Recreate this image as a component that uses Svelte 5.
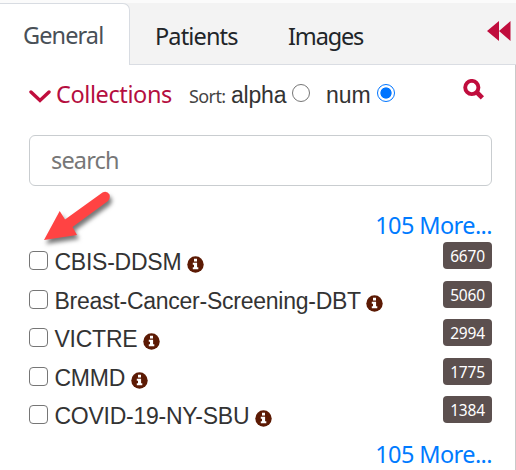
<script>
  let sort = $state('num');
  const collections = [
    { name: 'CBIS-DDSM', count: 6670 },
    { name: 'Breast-Cancer-Screening-DBT', count: 5060 },
    { name: 'VICTRE', count: 2994 },
    { name: 'CMMD', count: 1775 },
    { name: 'COVID-19-NY-SBU', count: 1384 }
  ];
</script>

<main class="panel">
  <nav class="tabs">
    <button class="tab active">General</button>
    <button class="tab patients">Patients</button>
    <button class="tab images">Images</button>
    <span class="filler"></span>
    <svg class="collapse" width="24" height="20" viewBox="0 0 24 20"><path d="M0 10 12 0V10L23.5 0V20L12 10V20Z" fill="#c00d3d" /></svg>
  </nav>
  <section class="body">
    <header class="heading">
      <svg class="chevron" width="22" height="14" viewBox="0 0 22 14"><path d="M2 2 11 10.5 20 2" fill="none" stroke="#c00d3d" stroke-width="3.4" stroke-linecap="round" /></svg>
      <span class="title">Collections</span>
      <span class="sort">Sort:</span>
      <label class="alpha">alpha<input type="radio" name="sort" value="alpha" bind:group={sort} /></label>
      <label class="num">num<input type="radio" name="sort" value="num" bind:group={sort} /></label>
      <svg class="magnifier" width="22" height="21" viewBox="0 0 22 21"><circle cx="8.8" cy="8.5" r="6.6" fill="none" stroke="#c00d3d" stroke-width="3.9" /><path d="M13.5 13 19.4 18.8" stroke="#c00d3d" stroke-width="4.6" /></svg>
    </header>
    <input class="search" type="text" placeholder="search" />
    <a class="more top" href="#more">105 More...</a>
    <ul>
      {#each collections as item}
        <li>
          <input type="checkbox" aria-label={item.name} />
          <span class="name">{item.name}</span>
          <svg class="info" width="17" height="17" viewBox="0 0 17 17"><circle cx="8.5" cy="8.5" r="8.2" fill="#5c1a04" /><path d="M7 2.7h3v2.8H7zM5.8 6.7h4.3v4.6h1.2v2H5.8v-2H7V8.7H5.8z" fill="#fff" /></svg>
          <span class="badge">{item.count}</span>
        </li>
      {/each}
    </ul>
    <a class="more" href="#more">105 More...</a>
  </section>
  <svg class="arrow" width="80" height="60" viewBox="0 0 80 60"><path d="M63.5 6.5 Q68 4.5 70.5 8.5 Q71.5 12.5 69 15L33.5 41 38 49 5 54 20.7 25 26 33.5Z" fill="#ff4343" /></svg>
</main>

<style>
  :global(body) { margin: 0; background: #fff; }
  * { box-sizing: border-box; }
  .panel { position: relative; width: 516px; height: 470px; overflow: hidden; border-top: 3px solid #fbfbfb; font-family: "Noto Sans", sans-serif; color: #333; }
  .tabs { display: flex; height: 62px; background: #f3f3f3; border-bottom: 1px solid #dadde3; }
  .tab { height: 62px; padding: 2px 0 0; margin: 0; border: 0; background: none; color: #212529; font: 23.5px/62px "Noto Sans", sans-serif; text-align: left; white-space: nowrap; }
  .tab.active { width: 130px; padding: 0 0 0 23px; background: #fff; color: #495057; border: 1px solid #d8dce2; border-width: 1px 1px 0 0; border-radius: 0 7px 0 0; letter-spacing: -.9px; }
  .patients { width: 134px; padding-left: 25px; letter-spacing: -.85px; }
  .images { width: 110px; padding-left: 24px; letter-spacing: -1.15px; }
  .filler { flex: 1; }
  .collapse { margin: 18px 5px 0 0; }
  .body { height: 405px; padding: 0 23px 0 29px; border-right: 1px solid #c9c9c9; }
  .heading { display: flex; height: 70px; align-items: flex-start; white-space: nowrap; }
  .chevron { margin-top: 25px; }
  .title { width: 133px; padding-left: 5px; color: #b50e40; font-size: 23.5px; line-height: 32px; margin-top: 13px; letter-spacing: -.4px; }
  .sort { width: 42px; padding-left: 0; font-size: 18px; line-height: 26px; margin-top: 18px; letter-spacing: -.6px; margin-left: 5px; color: #444; }
  label { display: flex; margin-top: 16px; font: 23px/28px "Liberation Sans", sans-serif; }
  .alpha { width: 95px; letter-spacing: -.2px; }
  .num { flex: 1; }
  label input { appearance: none; width: 18px; height: 18px; margin: 3px 0 0 6px; border: 1px solid #767676; border-radius: 50%; }
  label input:checked { border: 1.5px solid #0075ff; background: radial-gradient(circle, #0075ff 5.2px, #fff 6px); }
  .magnifier { margin: 14px 7px 0 0; }
  .search { display: block; width: 463px; height: 51px; padding: 0 21px 1px; border: 1px solid #c9cdd0; border-radius: 6px; outline: 0; background: #fff; font: 23.5px "Noto Sans", sans-serif; }
  .search::placeholder { color: #777; opacity: 1; letter-spacing: -.85px; }
  .more { display: block; height: 32px; color: #007bff; font-size: 23.5px; line-height: 30px; text-align: right; text-decoration: none; letter-spacing: -.6px; }
  .top { margin-top: 24px; }
  ul { list-style: none; padding: 0; margin: 0; height: 197px; }
  li { display: flex; height: 38.5px; align-items: flex-start; white-space: nowrap; }
  li input { appearance: none; width: 19px; height: 19px; flex: none; margin: 9px 6.5px 0 0; border: 1.5px solid #767676; border-radius: 4px; background: #fff; }
  .name { font: 23px/28px "Liberation Sans", sans-serif; margin-top: 6px; letter-spacing: -.25px; }
  .info { flex: none; margin: 14px 0 0 5.5px; }
  .badge { width: 49px; height: 27px; margin-left: auto; border-radius: 4px; background: #5c504f; color: #fff; font-size: 15.5px; line-height: 28px; text-align: center; letter-spacing: -.2px; }
  .arrow { position: absolute; left: 39px; top: 183px; overflow: visible; filter: drop-shadow(2px 4px 2px #0008); }
</style>
